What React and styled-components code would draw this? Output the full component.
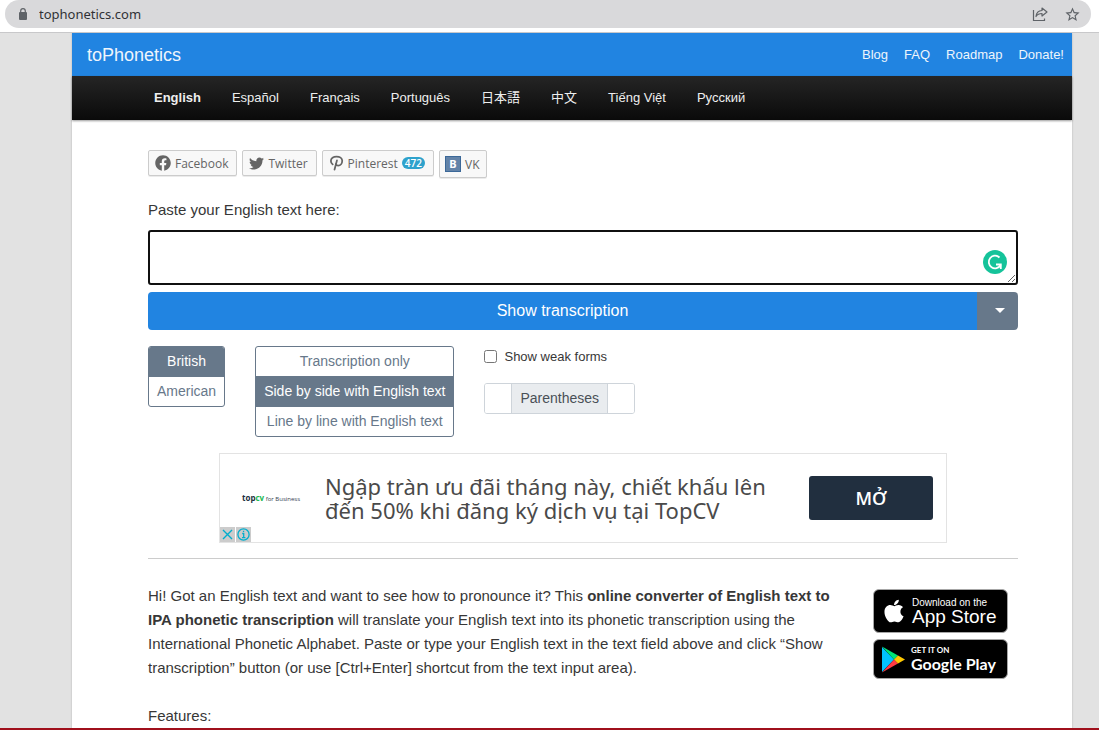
import React, { useState } from 'react';
import styled, { createGlobalStyle, css } from 'styled-components';
import { FaApple, FaFacebook, FaTwitter } from 'react-icons/fa';
import { MdStarBorder } from 'react-icons/md';

const GlobalStyle = createGlobalStyle`
  * {
    box-sizing: border-box;
  }

  body {
    margin: 0;
    font-family: 'Liberation Sans', Arial, 'Noto Sans CJK JP', sans-serif;
    font-size: 15px;
    line-height: 24px;
    color: #373737;
    background: #e2e2e2;
  }

  button, input, textarea {
    font-family: inherit;
  }
`;

const Window = styled.div`
  display: flex;
  flex-direction: column;
  height: 100vh;
  border-bottom: 2px solid #a0101c;
`;

const BrowserBar = styled.div`
  flex: none;
  padding: 0 8px 4px 5px;
  background: #fff;
  border-bottom: 1px solid #c8c8ca;
`;

const AddressBar = styled.div`
  display: flex;
  align-items: center;
  height: 28px;
  padding: 0 10px 0 13px;
  background: #d9d9db;
  border-radius: 14px;
  color: #5f6368;

  input {
    flex: 1;
    min-width: 0;
    margin-left: 11px;
    padding: 0;
    border: 0;
    outline: 0;
    background: none;
    color: #303236;
    font: 13px 'Noto Sans', sans-serif;
  }
`;

const IconButton = styled.button`
  display: flex;
  margin-left: 16px;
  padding: 0;
  border: 0;
  background: none;
  color: #5f6368;
`;

const Viewport = styled.div`
  flex: 1;
  min-height: 0;
  overflow: hidden;
  padding: 0 27px 0 72px;
`;

const Page = styled.div`
  min-height: 100%;
  background: #fff;
  box-shadow: 0 0 2px rgba(0, 0, 0, 0.2);
`;

const Header = styled.header`
  display: flex;
  align-items: center;
  justify-content: space-between;
  height: 43px;
  padding: 0 8px 0 15px;
  background: #2184e1;

  a {
    color: #eef5fc;
    text-decoration: none;
  }
`;

const SiteTitle = styled.a`
  font-size: 18px;
`;

const HeaderLinks = styled.nav`
  display: flex;
  gap: 16px;
  font-size: 13px;
`;

const LanguageNav = styled.nav`
  display: flex;
  gap: 31px;
  height: 44px;
  padding-left: 82px;
  align-items: center;
  background: linear-gradient(#252525, #0a0a0a);
  box-shadow: 0 1px 2px rgba(0, 0, 0, 0.4);
  font-size: 13px;
`;

const LanguageLink = styled.a`
  color: #eee;
  text-decoration: none;
  font-weight: ${({ $active }) => ($active ? 'bold' : 'normal')};
`;

const Content = styled.main`
  padding: 30px 54px 0 76px;
`;

const ShareRow = styled.div`
  display: flex;
  align-items: flex-start;
  gap: 5px;
`;

const ShareButton = styled.button`
  display: flex;
  align-items: center;
  gap: 4px;
  height: ${({ $tall }) => ($tall ? 28 : 26)}px;
  padding: ${({ $tall }) => ($tall ? '0 6px 0 5px' : '0 8px 0 6px')};
  background: #f8f8f8;
  border: 1px solid #ccc;
  border-radius: 2px;
  box-shadow: 0 1px 0 rgba(0, 0, 0, 0.08);
  color: #656565;
  font: 12px 'Open Sans', sans-serif;
`;

const ShareCount = styled.span`
  padding: 0 3px;
  border-radius: 6px;
  background: #2ea2cc;
  color: #fff;
  font-size: 10px;
  font-weight: 600;
  line-height: 12px;
`;

const VkMark = styled.span`
  width: 16px;
  border: 1px solid #3b6898;
  background: #6383a8;
  color: #fff;
  font: bold 11px/14px 'Noto Sans', sans-serif;
  text-align: center;
`;

const FieldLabel = styled.label`
  display: block;
  margin: 20px 0 8px;
`;

const TextField = styled.div`
  position: relative;
  display: flex;

  textarea {
    width: 100%;
    height: 55px;
    padding: 6px 12px;
    border: 2px solid #101010;
    border-radius: 3px;
    outline: 0;
    resize: vertical;
    font-size: 15px;
  }

  svg {
    position: absolute;
    right: 11px;
    bottom: 11px;
  }
`;

const SubmitGroup = styled.div`
  display: flex;
  height: 38px;
  margin-top: 7px;
  border-radius: 4px;
  overflow: hidden;

  button {
    border: 0;
    color: #fff;
    font-size: 16px;
  }
`;

const SubmitButton = styled.button`
  flex: 1;
  background: #2184e1;
`;

const MenuButton = styled.button`
  display: flex;
  align-items: center;
  justify-content: center;
  width: 41px;
  padding: 0 0 2px 4px;
  background: #67788a;
`;

const Options = styled.div`
  display: flex;
  align-items: flex-start;
  gap: 30px;
  margin-top: 16px;
`;

const RadioGroup = styled.div`
  border: 1px solid #67788a;
  border-radius: 3px;
  overflow: hidden;
`;

const RadioOption = styled.label`
  display: block;
  padding: 0 8px;
  color: #67788a;
  font-size: 14px;
  line-height: 29px;
  text-align: center;

  & + & {
    border-top: 1px solid #67788a;
  }

  input {
    position: absolute;
    opacity: 0;
    pointer-events: none;
  }

  ${({ $checked }) =>
    $checked &&
    css`
      background: #67788a;
      color: #fff;
    `}
`;

const Extras = styled.div`
  font-size: 13px;
`;

const CheckLabel = styled.label`
  display: flex;
  align-items: center;
  gap: 7px;
  line-height: 21px;

  input {
    width: 13px;
    height: 13px;
    margin: 0;
  }
`;

const BracketGroup = styled.div`
  display: flex;
  height: 31px;
  margin-top: 16px;
  border: 1px solid #ced4da;
  border-radius: 3px;
  overflow: hidden;
  font-size: 14px;

  input {
    width: 26px;
    padding: 0 4px;
    border: 0;
    outline: 0;
    text-align: center;
  }

  span {
    padding: 0 8px;
    border: solid #ced4da;
    border-width: 0 1px;
    background: #e9ecef;
    color: #495057;
    line-height: 29px;
  }
`;

const Ad = styled.aside`
  position: relative;
  display: flex;
  align-items: center;
  max-width: 728px;
  height: 90px;
  margin: 16px auto 15px;
  padding: 0 13px 0 22px;
  border: 1px solid #e3e3e3;
`;

const AdLogo = styled.div`
  flex: none;
  width: 83px;
  color: #34404f;
  font: 6px/12px 'Open Sans', sans-serif;

  strong {
    color: #212f3f;
    font-size: 8px;
  }

  em {
    color: #1db954;
    font-style: normal;
  }
`;

const AdText = styled.p`
  flex: 1;
  margin: 0;
  padding-right: 24px;
  color: #4a4a4a;
  font: 22px/24px 'Noto Sans', sans-serif;
`;

const AdButton = styled.button`
  flex: none;
  width: 124px;
  height: 44px;
  border: 0;
  border-radius: 3px;
  background: #212f3f;
  color: #fff;
  font: 600 18px 'Open Sans', sans-serif;
`;

const AdChoices = styled.div`
  position: absolute;
  left: 0;
  bottom: 0;
  display: flex;
  gap: 1px;

  button {
    display: flex;
    padding: 0;
    border: 0;
    background: #ccc;
  }
`;

const Divider = styled.hr`
  height: 1px;
  margin: 0;
  border: 0;
  background: #ccc;
`;

const Intro = styled.section`
  display: flex;
  align-items: flex-start;
  justify-content: space-between;
  margin-top: 25px;

  p {
    max-width: 690px;
    margin: 0 0 24px;
  }
`;

const Badges = styled.div`
  display: flex;
  flex-direction: column;
  gap: 6px;
  margin: 5px 10px 0 0;
`;

const StoreBadge = styled.a`
  display: flex;
  align-items: center;
  gap: 5px;
  width: 135px;
  height: ${({ $height }) => $height}px;
  padding-left: 7px;
  border: 1px solid #a6a6a6;
  border-radius: 6px;
  background: #000;
  color: #fff;
  text-decoration: none;
  white-space: nowrap;
`;

const AppStoreText = styled.span`
  display: flex;
  flex-direction: column;
  font: 19px/18px 'Liberation Sans', Arial, sans-serif;

  small {
    font-size: 10px;
    line-height: 11px;
  }
`;

const PlayStoreText = styled.span`
  display: flex;
  flex-direction: column;
  font: bold 16px/18px Lato, sans-serif;

  small {
    font-size: 8px;
    line-height: 10px;
  }
`;

const headerLinks = ['Blog', 'FAQ', 'Roadmap', 'Donate!'];
const languages = ['English', 'Español', 'Français', 'Português', '日本語', '中文', 'Tiếng Việt', 'Русский'];
const dialects = ['British', 'American'];
const layouts = ['Transcription only', 'Side by side with English text', 'Line by line with English text'];

const RadioButtons = ({ name, options, value, onChange }) => (
  <RadioGroup role="radiogroup" aria-label={name}>
    {options.map((option) => (
      <RadioOption key={option} $checked={option === value}>
        <input type="radio" name={name} checked={option === value} onChange={() => onChange(option)} />
        {option}
      </RadioOption>
    ))}
  </RadioGroup>
);

const LockIcon = () => (
  <svg width="10" height="12" viewBox="0 0 10 12">
    <rect x="1" y="4" width="8" height="8" rx="1" fill="currentColor" />
    <path d="M2.700 5V3a2.300 2.300 0 0 1 4.600 0v2" fill="none" stroke="currentColor" strokeWidth="1.2" />
  </svg>
);

const ShareIcon = () => (
  <svg width="16" height="16" viewBox="0 0 16 16" fill="none" stroke="currentColor" strokeWidth="1.2">
    <path d="M1.500 4v10.500h11v-2" />
    <path d="M4 10.500c.4-4 2.600-5.800 6-6V2l5 4-5 4V7.500c-2.800 0-4.600.8-6 3z" strokeLinejoin="round" />
  </svg>
);

const PinterestIcon = () => (
  <svg width="15" height="16" viewBox="0 0 16 16" fill="none" stroke="currentColor" strokeWidth="1.9" strokeLinecap="round">
    <path d="M4 9.500C2.700 8.700 2 7.500 2 5.900 2 3.100 4.700 1.100 8.100 1.100s6 2 6 4.600c0 3-1.900 5.100-4.300 5.100-1.200 0-2.200-.6-2.500-1.500" />
    <path d="M8.500 5.200L5.900 15" />
  </svg>
);

const GrammarIcon = () => (
  <svg width="24" height="24" viewBox="0 0 24 24" fill="none" stroke="#fff" strokeWidth="1.800">
    <circle cx="12" cy="12" r="12" fill="#15c39a" stroke="none" />
    <path d="M16.500 7.500A6.300 6.300 0 1 0 17.600 15" />
    <path d="M13 14.500h4.800v4.500" />
  </svg>
);

const PlayIcon = () => (
  <svg width="25" height="27" viewBox="0 0 25 27">
    <path d="M1 1v25l12-12.500z" fill="#00c3ff" />
    <path d="M1 .500l16 9-4 4z" fill="#00e676" />
    <path d="M1 26.500l16-9-4-4z" fill="#ff3a44" />
    <path d="M17 9.500l7 4-7 4-4-4z" fill="#ffc800" />
  </svg>
);

const App = () => {
  const [text, setText] = useState('');
  const [dialect, setDialect] = useState('British');
  const [layout, setLayout] = useState('Side by side with English text');
  const [weakForms, setWeakForms] = useState(false);

  return (
    <Window>
      <GlobalStyle />
      <BrowserBar>
        <AddressBar>
          <LockIcon />
          <input aria-label="Address" defaultValue="tophonetics.com" />
          <IconButton aria-label="Share">
            <ShareIcon />
          </IconButton>
          <IconButton aria-label="Bookmark">
            <MdStarBorder size={17} />
          </IconButton>
        </AddressBar>
      </BrowserBar>
      <Viewport>
        <Page>
          <Header>
            <SiteTitle href="#">toPhonetics</SiteTitle>
            <HeaderLinks>
              {headerLinks.map((link) => (
                <a key={link} href="#">{link}</a>
              ))}
            </HeaderLinks>
          </Header>
          <LanguageNav>
            {languages.map((language) => (
              <LanguageLink key={language} href="#" $active={language === 'English'}>
                {language}
              </LanguageLink>
            ))}
          </LanguageNav>
          <Content>
            <ShareRow>
              <ShareButton><FaFacebook size={16} />Facebook</ShareButton>
              <ShareButton><FaTwitter size={15} />Twitter</ShareButton>
              <ShareButton>
                <PinterestIcon />Pinterest<ShareCount>472</ShareCount>
              </ShareButton>
              <ShareButton $tall><VkMark>B</VkMark>VK</ShareButton>
            </ShareRow>
            <FieldLabel htmlFor="source">Paste your English text here:</FieldLabel>
            <TextField>
              <textarea id="source" value={text} onChange={(e) => setText(e.target.value)} />
              <GrammarIcon />
            </TextField>
            <SubmitGroup>
              <SubmitButton>Show transcription</SubmitButton>
              <MenuButton aria-label="More actions">
                <svg width="10" height="5" viewBox="0 0 10 5" fill="#fff">
                  <path d="M0 0h10l-5 5z" />
                </svg>
              </MenuButton>
            </SubmitGroup>
            <Options>
              <RadioButtons name="dialect" options={dialects} value={dialect} onChange={setDialect} />
              <RadioButtons name="layout" options={layouts} value={layout} onChange={setLayout} />
              <Extras>
                <CheckLabel>
                  <input type="checkbox" checked={weakForms} onChange={(e) => setWeakForms(e.target.checked)} />
                  Show weak forms
                </CheckLabel>
                <BracketGroup>
                  <input aria-label="Text before" />
                  <span>Parentheses</span>
                  <input aria-label="Text after" />
                </BracketGroup>
              </Extras>
            </Options>
            <Ad>
              <AdLogo><strong>top<em>cv</em></strong> for Business</AdLogo>
              <AdText>Ngập tràn ưu đãi tháng này, chiết khấu lên đến 50% khi đăng ký dịch vụ tại TopCV</AdText>
              <AdButton>MỞ</AdButton>
              <AdChoices>
                <button aria-label="Close ad">
                  <svg width="15" height="15" viewBox="0 0 15 15" stroke="#00aecd" strokeWidth="1.4">
                    <path d="M3 3l9 9M12 3l-9 9" />
                  </svg>
                </button>
                <button aria-label="About this ad">
                  <svg width="15" height="15" viewBox="0 0 15 15" fill="none" stroke="#00aecd" strokeWidth="1.3">
                    <circle cx="7.500" cy="7.500" r="5.600" />
                    <path d="M6.200 6.500h1.500v4M6 10.700h3.400M6.900 4.300h1.300" />
                  </svg>
                </button>
              </AdChoices>
            </Ad>
            <Divider />
            <Intro>
              <div>
                <p>
                  Hi! Got an English text and want to see how to pronounce it? This{' '}
                  <strong>online converter of English text to IPA phonetic transcription</strong> will
                  translate your English text into its phonetic transcription using the International
                  Phonetic Alphabet. Paste or type your English text in the text field above and
                  click “Show transcription” button (or use [Ctrl+Enter] shortcut from the text input area).
                </p>
                <p>Features:</p>
              </div>
              <Badges>
                <StoreBadge href="#" $height={44}>
                  <FaApple size={26} />
                  <AppStoreText><small>Download on the</small>App Store</AppStoreText>
                </StoreBadge>
                <StoreBadge href="#" $height={40}>
                  <PlayIcon />
                  <PlayStoreText><small>GET IT ON</small>Google Play</PlayStoreText>
                </StoreBadge>
              </Badges>
            </Intro>
          </Content>
        </Page>
      </Viewport>
    </Window>
  );
};

export default App;
